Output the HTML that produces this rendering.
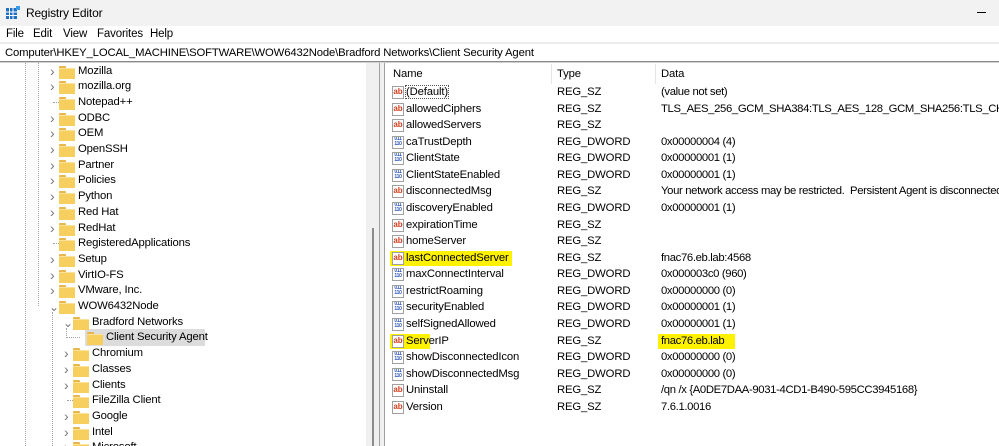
<!DOCTYPE html>
<html><head><meta charset="utf-8"><style>
*{margin:0;padding:0;box-sizing:border-box}
html,body{width:999px;height:446px;overflow:hidden}
body{background:#fff;font-family:"Liberation Sans",sans-serif;font-size:11.3px;color:#000;position:relative;letter-spacing:-0.15px}
#w{position:absolute;left:0;top:0;width:999px;height:446px;overflow:hidden}
.a{position:absolute;white-space:nowrap}
.fold{position:absolute;width:16px;height:12px}
.fold:before{content:"";position:absolute;left:0;top:0;width:7px;height:3px;background:#e8b74a;border-radius:1px 1px 0 0}
.fold:after{content:"";position:absolute;left:0;top:2px;width:16px;height:10px;background:#f7cf5e;border-top:1px solid #fbe29a}
.chev{position:absolute;font-size:10px;color:#777}
.ic{position:absolute;width:12px;height:13px;border:1px solid #a0a0a0;background:#fff;font-size:8px;font-weight:bold;line-height:10px;text-align:center;overflow:hidden;letter-spacing:0}
.sz{color:#d23c1c}
.dw{color:#2a55b8;font-size:5px;line-height:5px;letter-spacing:-0.3px}
.hl{background:#fff200}
</style></head><body><div id="w">
<div class="a" style="left:0;top:0;width:999px;height:26px;background:#f2f2f2"></div>
<svg class="a" style="left:5px;top:5px" width="16" height="16"><rect x="1" y="3" width="11" height="11" fill="#1f6fc5"/><g stroke="#fff" stroke-width="1"><line x1="1" y1="7" x2="12" y2="7"/><line x1="1" y1="10.5" x2="12" y2="10.5"/><line x1="4.5" y1="3" x2="4.5" y2="14"/><line x1="8" y1="3" x2="8" y2="14"/></g><rect x="11" y="1" width="4" height="4" fill="#3a9be8"/></svg>
<div class="a" style="left:26px;top:6px;font-size:12px">Registry Editor</div>
<div class="a" style="left:977px;top:12px;width:9px;height:1px;background:#000"></div>
<div class="a" style="left:6px;top:28px;font-size:11.5px">File</div>
<div class="a" style="left:33px;top:28px;font-size:11.5px">Edit</div>
<div class="a" style="left:63px;top:28px;font-size:11.5px">View</div>
<div class="a" style="left:97px;top:28px;font-size:11.5px">Favorites</div>
<div class="a" style="left:150px;top:28px;font-size:11.5px">Help</div>
<div class="a" style="left:0;top:42px;width:999px;height:2px;background:#ececec"></div>
<div class="a" style="left:5px;top:47px;font-size:11.3px">Computer\HKEY_LOCAL_MACHINE\SOFTWARE\WOW6432Node\Bradford Networks\Client Security Agent</div>
<div class="a" style="left:0;top:61px;width:999px;height:1px;background:#8a8a8a"></div>
<div class="a" style="left:0;top:62px;width:999px;height:1px;background:#d0d0d0"></div>
<div class="a" style="left:366px;top:63px;width:13px;height:383px;background:#f0f0f0"></div>
<div class="a" style="left:372px;top:228px;width:2px;height:218px;background:#8c8c8c"></div>
<div class="a" style="left:379px;top:63px;width:1px;height:383px;background:#a0a0a0"></div>
<div class="a" style="left:380px;top:63px;width:4px;height:383px;background:#f0f0f0"></div>
<div class="a" style="left:384px;top:63px;width:1px;height:383px;background:#a0a0a0"></div>
<div class="a" style="left:25px;top:63px;height:383px;border-left:1px dotted #a0a0a0"></div>
<div class="a" style="left:38px;top:63px;height:243px;border-left:1px dotted #a0a0a0"></div>
<div class="a" style="left:52px;top:312px;height:134px;border-left:1px dotted #a0a0a0"></div>
<div class="a" style="left:66px;top:328px;height:10px;border-left:1px dotted #a0a0a0"></div>
<div class="a" style="left:66px;top:337px;width:14px;border-top:1px dotted #a0a0a0"></div>
<div class="a" style="left:85px;top:329px;width:120px;height:17px;background:#dcdcdc"></div>
<div id="tree"></div>
<div class="a" style="left:393px;top:68px">Name</div>
<div class="a" style="left:551px;top:64px;width:1px;height:20px;background:#e5e5e5"></div>
<div class="a" style="left:557px;top:68px">Type</div>
<div class="a" style="left:655px;top:64px;width:1px;height:20px;background:#e5e5e5"></div>
<div class="a" style="left:661px;top:68px">Data</div>
<div id="list"></div>
</div>
<script>
var t=[["Mozilla",0,1],["mozilla.org",0,1],["Notepad++",0,0],["ODBC",0,1],["OEM",0,1],["OpenSSH",0,1],["Partner",0,1],["Policies",0,1],["Python",0,1],["Red Hat",0,1],["RedHat",0,1],["RegisteredApplications",0,0],["Setup",0,1],["VirtIO-FS",0,1],["VMware, Inc.",0,1],["WOW6432Node",0,2],["Bradford Networks",1,2],["Client Security Agent",2,0],["Chromium",1,1],["Classes",1,1],["Clients",1,1],["FileZilla Client",1,0],["Google",1,1],["Intel",1,1],["Microsoft",1,1]];
var h="";
t.forEach(function(r,i){var y=63.5+i*15.7,x=52+r[1]*14;
if(r[2]==1)h+='<div class="chev" style="left:'+(x-2)+'px;top:'+(y+1)+'px"><span style="font-size:14px;line-height:12px">›</span></div>';
else if(r[2]==2)h+='<div class="chev" style="left:'+(x-3)+'px;top:'+(y+1)+'px"><span style="font-size:12px">⌄</span></div>';
else if(i!=17)h+='<div class="a" style="left:'+(x+1)+'px;top:'+(y+7)+'px;width:6px;border-top:1px dotted #a0a0a0"></div>';
h+='<div class="fold" style="left:'+(x+7)+'px;top:'+(y+2)+'px"></div>';
h+='<div class="a" style="left:'+(x+26)+'px;top:'+(y+1)+'px">'+r[0]+'</div>';});
document.getElementById('tree').innerHTML=h;
var l=[["(Default)","REG_SZ","(value not set)",0],["allowedCiphers","REG_SZ","TLS_AES_256_GCM_SHA384:TLS_AES_128_GCM_SHA256:TLS_CHACHA20_POLY1305_SHA256",0],["allowedServers","REG_SZ","",0],["caTrustDepth","REG_DWORD","0x00000004 (4)",1],["ClientState","REG_DWORD","0x00000001 (1)",1],["ClientStateEnabled","REG_DWORD","0x00000001 (1)",1],["disconnectedMsg","REG_SZ","Your network access may be restricted.&nbsp; Persistent Agent is disconnected from",0],["discoveryEnabled","REG_DWORD","0x00000001 (1)",1],["expirationTime","REG_SZ","",0],["homeServer","REG_SZ","",0],["lastConnectedServer","REG_SZ","fnac76.eb.lab:4568",0,1],["maxConnectInterval","REG_DWORD","0x000003c0 (960)",1],["restrictRoaming","REG_DWORD","0x00000000 (0)",1],["securityEnabled","REG_DWORD","0x00000001 (1)",1],["selfSignedAllowed","REG_DWORD","0x00000001 (1)",1],["ServerIP","REG_SZ","fnac76.eb.lab",0,2],["showDisconnectedIcon","REG_DWORD","0x00000000 (0)",1],["showDisconnectedMsg","REG_DWORD","0x00000000 (0)",1],["Uninstall","REG_SZ","/qn /x {A0DE7DAA-9031-4CD1-B490-595CC3945168}",0],["Version","REG_SZ","7.6.1.0016",0]];
h="";
l.forEach(function(r,i){var y=85+i*16.57;
if(r[4])h+='<div class="a hl" style="left:390px;top:'+y+'px;width:'+(r[4]==1?122:40)+'px;height:15px"></div>';
if(r[4]==2)h+='<div class="a hl" style="left:658px;top:'+y+'px;width:77px;height:15px"></div>';
if(r[3])h+='<div class="ic dw" style="left:392px;top:'+(y+1)+'px">011<br>110</div>';
else h+='<div class="ic sz" style="left:392px;top:'+(y+1)+'px">ab</div>';
h+='<div class="a" style="left:406px;top:'+(y+1)+'px'+(i==0?';outline:1px dotted #555':'')+'">'+r[0]+'</div>';
h+='<div class="a" style="left:557px;top:'+(y+1)+'px">'+r[1]+'</div>';
h+='<div class="a" style="left:661px;top:'+(y+1)+'px;letter-spacing:-0.35px">'+r[2]+'</div>';});
document.getElementById('list').innerHTML=h;
</script>
</body></html>
